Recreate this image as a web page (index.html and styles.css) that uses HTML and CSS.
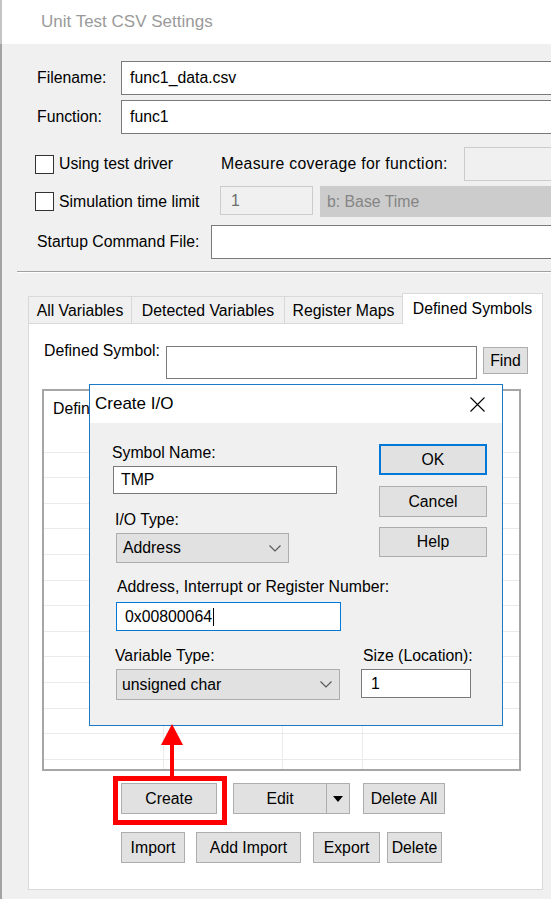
FILE: index.html
```html
<!DOCTYPE html>
<html>
<head>
<meta charset="utf-8">
<title>Unit Test CSV Settings</title>
<link rel="stylesheet" href="styles.css">
</head>
<body>
<div class="titlebar">Unit Test CSV Settings</div>

<div class="row r-file"><span class="lbl w84">Filename:</span><div class="field wide">func1_data.csv</div></div>
<div class="row r-func"><span class="lbl w84">Function:</span><div class="field wide">func1</div></div>
<div class="row r-chk1">
  <span class="check"></span><span class="chk-lbl">Using test driver</span>
  <span class="lbl measure">Measure coverage for function:</span>
  <div class="field disabled measure-in"></div>
</div>
<div class="row r-chk2">
  <span class="check"></span><span class="chk-lbl sim">Simulation time limit</span>
  <div class="field disabled num">1</div>
  <div class="combo-dis">b: Base Time</div>
</div>
<div class="row r-start"><span class="lbl w174">Startup Command File:</span><div class="field wide"></div></div>
<div class="sep"></div>

<div class="tabs">
  <div class="tab t1">All Variables</div>
  <div class="tab t2">Detected Variables</div>
  <div class="tab t3">Register Maps</div>
  <div class="tab active">Defined Symbols</div>
</div>
<div class="panel">
  <div class="sym-row">
    <span class="lbl sym-lbl">Defined Symbol:</span>
    <div class="field sym-in"></div>
    <div class="btn find">Find</div>
  </div>
  <div class="list">
    <div class="list-head"><span class="head-cell">Defined Symbol</span></div>
    <div class="list-body"></div>
  </div>
  <div class="btn-row row1">
    <div class="btn b-create">Create</div>
    <div class="btn split"><span class="split-main">Edit</span><span class="split-drop"><svg width="10" height="6" viewBox="0 0 10 6"><polygon points="0,0 10,0 5,6" fill="#000"/></svg></span></div>
    <div class="btn b-delall">Delete All</div>
  </div>
  <div class="btn-row row2">
    <div class="btn b-import">Import</div>
    <div class="btn b-addimp">Add Import</div>
    <div class="btn b-export">Export</div>
    <div class="btn b-delete">Delete</div>
  </div>
</div>

<div class="dialog">
  <div class="dlg-title">
    <span>Create I/O</span>
    <svg class="close" width="15" height="15" viewBox="0 0 15 15"><path d="M0.5 0.5 L14.5 14.5 M14.5 0.5 L0.5 14.5" stroke="#000" stroke-width="1.1" fill="none"/></svg>
  </div>
  <div class="dlg-body">
    <div class="dlg-top">
      <div class="dlg-left">
        <div class="dlbl first">Symbol Name:</div>
        <div class="field d-sym">TMP</div>
        <div class="dlbl iot">I/O Type:</div>
        <div class="dcombo d-iot"><span>Address</span><svg width="12" height="7" viewBox="0 0 12 7"><polyline points="0.5,0.5 6,6 11.5,0.5" fill="none" stroke="#555" stroke-width="1.1"/></svg></div>
      </div>
      <div class="dlg-right">
        <div class="btn dbtn ok">OK</div>
        <div class="btn dbtn cancel">Cancel</div>
        <div class="btn dbtn help">Help</div>
      </div>
    </div>
    <div class="dlbl addr-lbl">Address, Interrupt or Register Number:</div>
    <div class="field d-addr">0x00800064<span class="caret"></span></div>
    <div class="dlg-bottom">
      <div class="dlg-left">
        <div class="dlbl vt">Variable Type:</div>
        <div class="dcombo d-vt"><span>unsigned char</span><svg width="12" height="7" viewBox="0 0 12 7"><polyline points="0.5,0.5 6,6 11.5,0.5" fill="none" stroke="#555" stroke-width="1.1"/></svg></div>
      </div>
      <div class="dlg-size">
        <div class="dlbl sz">Size (Location):</div>
        <div class="field d-size">1</div>
      </div>
    </div>
  </div>
</div>

<div class="red-box"></div>
<svg class="red-arrow" width="24" height="58" viewBox="0 0 24 58">
  <polygon points="12,4 1,25 23,25" fill="#f00"/>
  <rect x="10" y="24" width="4" height="33" fill="#f00"/>
</svg>
</body>
</html>
```

FILE: styles.css
```css
body {
  margin: 0;
  width: 551px;
  height: 899px;
  overflow: hidden;
  position: relative;
  background: linear-gradient(to right, #a3a3a3 0 2px, #f0f0f0 2px);
  font-family: "Liberation Sans", Arial, sans-serif;
  font-size: 15.8px;
  color: #000;
}

.titlebar {
  height: 44px;
  box-sizing: border-box;
  padding-left: 41px;
  display: flex;
  align-items: center;
  background: linear-gradient(to right, #c4c4c4 0 2px, #fff 2px);
  color: #9a9a9a;
  font-size: 17px;
}

.row { display: flex; align-items: center; white-space: nowrap; }
.lbl { flex: none; white-space: nowrap; }
.w84 { width: 84px; }
.w174 { width: 174px; }

.field {
  box-sizing: border-box;
  flex: none;
  height: 100%;
  border: 1px solid #7a7a7a;
  background: #fff;
  padding-left: 8px;
  display: flex;
  align-items: center;
  white-space: nowrap;
}
.field.wide { width: 460px; }
.field.disabled { background: #f0f0f0; border-color: #cccccc; color: #6d6d6d; }

.r-file { margin-top: 17px; height: 34px; padding-left: 37px; }
.r-func { margin-top: 5px; height: 34px; padding-left: 37px; }
.r-chk1 { margin-top: 13px; height: 34px; padding-left: 35px; }
.r-chk2 { margin-top: 5px; height: 31px; padding-left: 35px; }
.r-start { margin-top: 8px; height: 34px; padding-left: 37px; }

.check {
  flex: none;
  width: 19px;
  height: 19px;
  box-sizing: border-box;
  border: 1px solid #333;
  background: #fff;
}
.chk-lbl { flex: none; margin-left: 5px; width: 162px; }
.chk-lbl.sim { width: 161px; }
.measure { width: 243px; letter-spacing: 0.3px; }
.measure-in { width: 100px; }
.num { width: 93px; height: 29px; align-self: flex-start; padding-left: 10px; }
.combo-dis {
  flex: none;
  margin-left: 7px;
  width: 240px;
  height: 31px;
  box-sizing: border-box;
  background: #cccccc;
  color: #858585;
  padding-left: 7px;
  display: flex;
  align-items: center;
}

.sep {
  margin: 12px 0 0 17px;
  height: 1px;
  background: #a0a0a0;
  border-bottom: 1px solid #fff;
}

.tabs {
  margin: 20px 0 0 28px;
  height: 31px;
  display: flex;
  align-items: flex-end;
  position: relative;
  z-index: 1;
}
.tab {
  box-sizing: border-box;
  height: 27px;
  margin-bottom: 1px;
  margin-left: -1px;
  border: 1px solid #d9d9d9;
  border-bottom: none;
  background: #f0f0f0;
  display: flex;
  align-items: center;
  justify-content: center;
  padding-top: 2px;
  white-space: nowrap;
}
.t1 { width: 104px; margin-left: 0; }
.t2 { width: 154px; }
.t3 { width: 119px; }
.tab.active {
  width: 141px;
  height: 31px;
  margin-bottom: 0;
  background: #fff;
  padding-top: 0;
}

.panel {
  margin: -1px 0 0 28px;
  width: 515px;
  height: 567px;
  box-sizing: border-box;
  border: 1px solid #d9d9d9;
  background: #fff;
  padding: 17px 0 0 15px;
}
.sym-row { display: flex; align-items: flex-start; }
.sym-lbl { width: 122px; line-height: 20px; }
.sym-in { margin-top: 5px; width: 311px; height: 33px; }

.btn {
  box-sizing: border-box;
  flex: none;
  height: 31px;
  border: 1px solid #adadad;
  background: #e1e1e1;
  display: flex;
  align-items: center;
  justify-content: center;
  white-space: nowrap;
}
.find { margin-top: 6px; margin-left: 6px; width: 45px; height: 27px; }

.list {
  margin: 10px 0 0 -2px;
  width: 479px;
  height: 382px;
  box-sizing: border-box;
  border: 2px solid #a6a6a6;
  background: #fff;
}
.list-head {
  height: 36px;
  padding-left: 9px;
  display: flex;
  align-items: center;
}
.head-cell {
  width: 36px;
  overflow: hidden;
  white-space: nowrap;
}
.list-body {
  height: 342px;
  background:
    linear-gradient(#ebebeb, #ebebeb) 119px 0 / 1px 100% no-repeat,
    linear-gradient(#ebebeb, #ebebeb) 238px 0 / 1px 100% no-repeat,
    linear-gradient(#ebebeb, #ebebeb) 318px 0 / 1px 100% no-repeat,
    repeating-linear-gradient(to bottom, transparent 0 24.6px, #ebebeb 24.6px 25.6px);
}

.btn-row { display: flex; margin-left: 77px; }
.row1 { margin-top: 12px; }
.row2 { margin-top: 18px; }
.b-create { width: 96px; }
.split { margin-left: 16px; width: 117px; justify-content: stretch; }
.split-main { flex: 1; text-align: center; }
.split-drop {
  width: 23px;
  height: 100%;
  box-sizing: border-box;
  border-left: 1px solid #adadad;
  display: flex;
  align-items: center;
  justify-content: center;
}
.b-delall { margin-left: 13px; width: 82px; }
.b-import { width: 64px; }
.b-addimp { margin-left: 11px; width: 105px; }
.b-export { margin-left: 12px; width: 67px; }
.b-delete { margin-left: 7px; width: 55px; }

.dialog {
  position: absolute;
  left: 89px;
  top: 384px;
  width: 414px;
  height: 342px;
  box-sizing: border-box;
  border: 1px solid #1a79c9;
  background: #f0f0f0;
  z-index: 5;
}
.dlg-title {
  height: 38px;
  background: #fff;
  display: flex;
  align-items: center;
  justify-content: space-between;
  padding-left: 5px;
  font-size: 17px;
}
.close { margin-right: 17px; }
.dlg-body { padding-left: 22px; }
.dlg-top { display: flex; }
.dlg-left { width: 229px; display: flex; flex-direction: column; align-items: flex-start; }
.dlbl { line-height: 20px; white-space: nowrap; }
.dlbl.first { margin-top: 20px; }
.d-sym { margin-top: 3px; margin-left: 1px; width: 224px; height: 28px; padding-left: 7px; }
.dlbl.iot { margin-top: 16px; margin-left: 3px; }
.dcombo {
  box-sizing: border-box;
  border: 1px solid #adadad;
  background: #e1e1e1;
  display: flex;
  align-items: center;
  justify-content: space-between;
  padding-right: 7px;
}
.d-iot { margin-top: 3px; margin-left: 4px; width: 173px; height: 30px; padding-left: 6px; }
.dlg-right { margin-left: 38px; padding-top: 21px; width: 108px; }
.dbtn { width: 108px; }
.ok { border: 2px solid #0078d7; }
.cancel { margin-top: 11px; }
.help { margin-top: 10px; height: 30px; }
.addr-lbl { margin-top: 14px; margin-left: 5px; }
.d-addr {
  margin-top: 5px;
  margin-left: 4px;
  width: 225px;
  height: 29px;
  border-color: #0078d7;
}
.caret { display: inline-block; width: 1px; height: 18px; background: #000; margin-left: 1px; }
.dlg-bottom { display: flex; margin-top: 15px; }
.dlbl.vt { margin-left: 3px; }
.d-vt { margin-top: 3px; margin-left: 4px; width: 224px; height: 31px; padding-left: 5px; }
.dlg-size { margin-left: 20px; }
.dlbl.sz { margin-left: 2px; }
.d-size { margin-top: 3px; width: 110px; height: 29px; padding-left: 9px; }

.red-box {
  position: absolute;
  left: 113px;
  top: 776px;
  width: 114px;
  height: 49px;
  box-sizing: border-box;
  border: 5px solid #f00;
  z-index: 6;
}
.red-arrow {
  position: absolute;
  left: 160px;
  top: 720px;
  z-index: 6;
}
```
